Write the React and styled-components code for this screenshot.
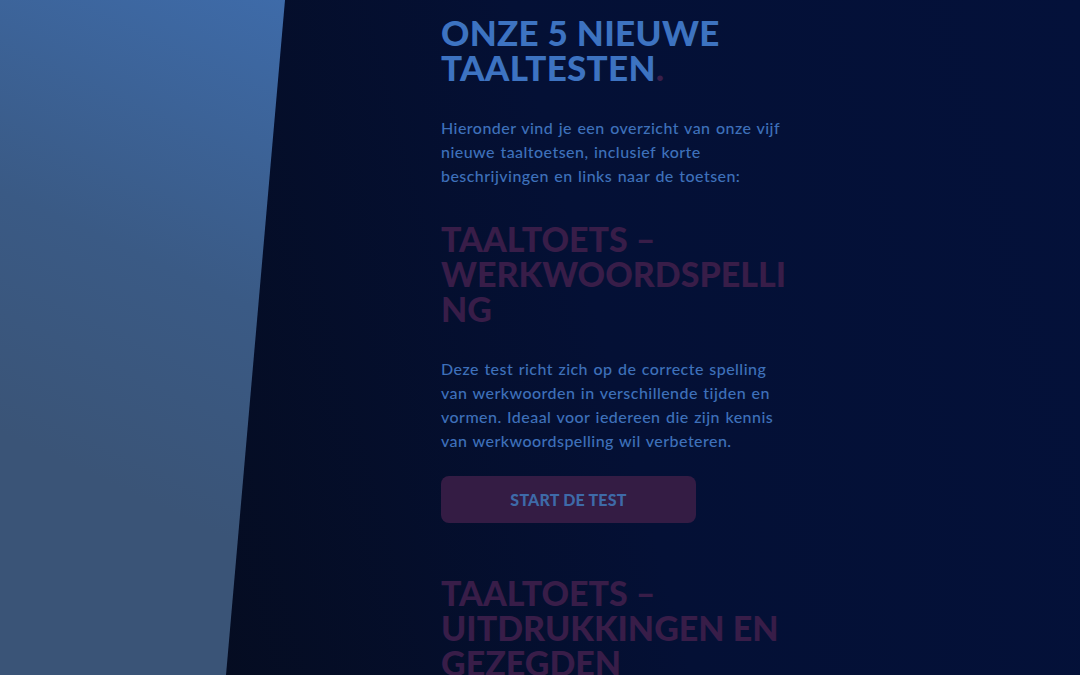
import styled, { createGlobalStyle } from 'styled-components'

const GlobalStyle = createGlobalStyle`
  html, body{
    margin: 0;
    padding: 0;
    height: 100%;
  }
  body{
    font-family: Lato, "Open Sans", sans-serif;
    background: #050d24;
  }
`

const Page = styled.main`
  display: grid;
  grid-template-columns: 285px 1fr;
  grid-template-rows: 675px;
  width: 1080px;
  height: 675px;
  overflow: hidden;
  background: linear-gradient(75deg, #050c20 15%, #041035 55%, #04113a 100%);
`

const SidePanel = styled.aside`
  height: 100%;
  background: linear-gradient(205deg, #3e6ba9 0%, #3a5a85 40%, #3a5477 70%, #3a5477 100%);
  clip-path: polygon(0 0, 285px 0, 226px 100%, 0 100%);
`

const Content = styled.section`
  padding: 15px 0 0 156px;
  .inner{
    width: 350px;
  }
`

const PageTitle = styled.h1`
  margin: 0 0 31px;
  font-size: 35px;
  line-height: 35px;
  font-weight: 900;
  color: #3d73c1;
  text-transform: uppercase;
  letter-spacing: 0.3px;
  span{
    color: #3a1f4a;
  }
`

const Text = styled.p`
  margin: 0 0 ${p => p.$gap || 0}px;
  font-size: 16px;
  line-height: 24px;
  font-weight: 500;
  letter-spacing: 0.45px;
  word-spacing: 1px;
  color: #3e70ba;
`

const TestTitle = styled.h2`
  margin: 0 0 31px;
  font-size: 34px;
  line-height: 35px;
  font-weight: 900;
  color: #381d48;
  text-transform: uppercase;
  overflow-wrap: anywhere;
`

const StartButton = styled.button`
  display: flex;
  align-items: center;
  justify-content: center;
  width: 255px;
  height: 47px;
  margin-bottom: 52px;
  border: none;
  border-radius: 8px;
  background: #341c44;
  color: #3e6aa8;
  font-family: Lato, sans-serif;
  font-size: 16px;
  font-weight: 900;
  letter-spacing: 0.2px;
  text-transform: uppercase;
  cursor: pointer;
`

const tests = [
  {
    title: 'Taaltoets – Werkwoordspelling',
    text: 'Deze test richt zich op de correcte spelling van werkwoorden in verschillende tijden en vormen. Ideaal voor iedereen die zijn kennis van werkwoordspelling wil verbeteren.',
  },
  {
    title: 'Taaltoets – Uitdrukkingen en gezegden',
    text: 'Test je kennis van Nederlandse uitdrukkingen en gezegden en ontdek wat ze betekenen.',
  },
]

function App() {
  return (
    <>
      <GlobalStyle />
      <Page>
        <SidePanel />
        <Content>
          <div className="inner">
            <PageTitle>Onze 5 nieuwe taaltesten<span>.</span></PageTitle>
            <Text $gap={33}>
              Hieronder vind je een overzicht van onze vijf nieuwe taaltoetsen, inclusief korte beschrijvingen en links naar de toetsen:
            </Text>
            {tests.map((t) => (
              <div key={t.title}>
                <TestTitle>{t.title}</TestTitle>
                <Text $gap={23}>{t.text}</Text>
                <StartButton>Start de test</StartButton>
              </div>
            ))}
          </div>
        </Content>
      </Page>
    </>
  )
}

export default App
